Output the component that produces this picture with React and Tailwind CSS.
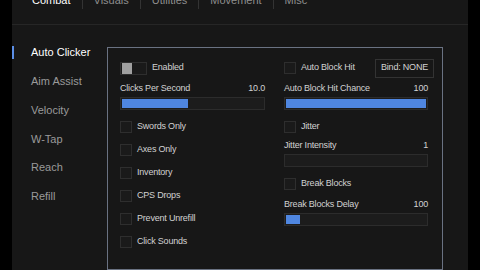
import React from "react";

const tabs = ["Combat", "Visuals", "Utilities", "Movement", "Misc"];
const modules = ["Auto Clicker", "Aim Assist", "Velocity", "W-Tap", "Reach", "Refill"];

function Check({ label }) {
  return (
    <div className="flex h-[23px] items-center gap-[5px]">
      <div className="h-[12px] w-[12px] border border-[#2e2e2e] bg-[#1a1a1a]" />
      <span>{label}</span>
    </div>
  );
}

function Slider({ label, value, fill }) {
  return (
    <div className="flex flex-col">
      <div className="flex h-[12px] items-center justify-between">
        <span>{label}</span>
        <span>{value}</span>
      </div>
      <div className="mt-[2px] h-[13px] border border-[#2c2c2c] bg-[#1c1c1c] p-px">
        <div className="h-full bg-[#4f86e0]" style={{ width: fill }} />
      </div>
    </div>
  );
}

export default function App() {
  return (
    <div
      className="flex h-[270px] w-[480px] overflow-hidden bg-black text-[9px] tracking-[-0.2px] text-[#d2d2d2]"
      style={{ fontFamily: '"Liberation Sans", Arial, sans-serif' }}
    >
      <div className="ml-[12px] flex w-[456px] flex-col bg-[#171717]">
        <div className="h-[25px] border-b border-[#262626]">
          <div className="-mt-[9px] flex h-[18px] items-center pl-[9px] text-[11px] tracking-normal text-[#8e8e8e]">
            {tabs.map((t, i) => (
              <div
                key={t}
                className={`flex h-full items-center px-[11px] ${i > 0 ? "border-l border-[#333]" : ""} ${i === 0 ? "text-white" : ""}`}
              >
                {t}
              </div>
            ))}
          </div>
        </div>
        <div className="flex flex-1">
          <div className="flex w-[95px] flex-col pt-[13px] text-[11px] tracking-normal text-[#9a9a9a]">
            {modules.map((m, i) => (
              <div key={m} className="flex h-[28.8px] items-center">
                <div className={`h-[13px] w-[2px] ${i === 0 ? "bg-[#5b8ee6]" : ""}`} />
                <span className={`ml-[17px] ${i === 0 ? "text-white" : ""}`}>{m}</span>
              </div>
            ))}
          </div>
          <div className="mt-[22px] flex w-[336px] gap-[19px] border border-[#6a7282] pl-[12px] pr-[7px] pt-[10px]">
            <div className="flex w-[145px] flex-col">
              <div className="flex h-[20px] items-center gap-[5px]">
                <div className="flex h-[13px] w-[27px] items-center border border-[#2e2e2e] bg-[#1a1a1a] px-px">
                  <div className="h-[11px] w-[10px] bg-[#a0a0a0]" />
                </div>
                <span>Enabled</span>
              </div>
              <div className="mt-[5px]">
                <Slider label="Clicks Per Second" value="10.0" fill="47%" />
              </div>
              <div className="mt-[5px] flex flex-col">
                <Check label="Swords Only" />
                <Check label="Axes Only" />
                <Check label="Inventory" />
                <Check label="CPS Drops" />
                <Check label="Prevent Unrefill" />
                <Check label="Click Sounds" />
              </div>
            </div>
            <div className="flex w-[150px] flex-col">
              <div className="flex h-[20px] items-center justify-between">
                <div className="flex items-center gap-[5px]">
                  <div className="h-[12px] w-[12px] border border-[#2e2e2e] bg-[#1a1a1a]" />
                  <span>Auto Block Hit</span>
                </div>
                <div className="flex h-[19px] items-center border border-[#333] px-[5px]">
                  Bind: NONE
                </div>
              </div>
              <div className="mt-[5px] w-[144px]">
                <Slider label="Auto Block Hit Chance" value="100" fill="100%" />
              </div>
              <div className="mt-[5px] w-[144px]">
                <Check label="Jitter" />
                <div className="mt-[2px]">
                  <Slider label="Jitter Intensity" value="1" fill="0%" />
                </div>
                <div className="mt-[5px]">
                  <Check label="Break Blocks" />
                </div>
                <div className="mt-[4px]">
                  <Slider label="Break Blocks Delay" value="100" fill="10%" />
                </div>
              </div>
            </div>
          </div>
        </div>
      </div>
    </div>
  );
}
